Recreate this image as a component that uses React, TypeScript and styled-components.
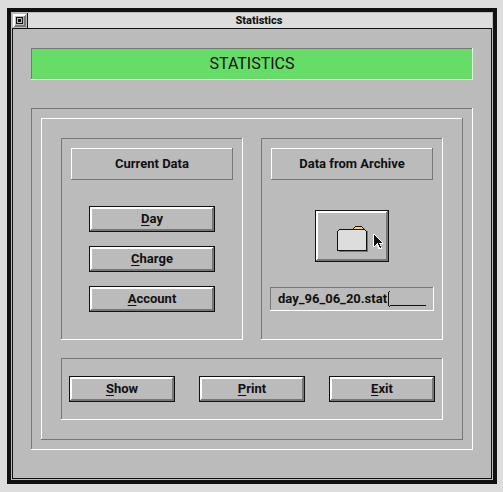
import React, { useState } from "react";
import styled, { createGlobalStyle, css } from "styled-components";

const ink = "#111";
const face = "#bbb";
const shade = "#777";
const pale = "#ddd";

const Global = createGlobalStyle`
  * { box-sizing: border-box; }
  body {
    margin: 0;
    background: ${pale};
    color: ${ink};
    font: bold 12px/16px Roboto, "Liberation Sans", sans-serif;
  }
  button, input { font: inherit; color: inherit; }
`;

const sunken = css`
  box-shadow: inset -1px -1px #fff, inset 1px 1px ${shade};
`;

const raised = css`
  box-shadow: inset -1px -1px ${shade}, inset 1px 1px #fff;
`;

const Desktop = styled.div`
  padding: 8px 6px 8px 7px;
`;

const Window = styled.section`
  border: 4px solid ${ink};
  padding: 1px;
  background: ${face};
`;

const TitleBar = styled.header`
  display: flex;
  height: 15px;
  background: ${pale};
`;

const MenuButton = styled.button`
  display: block;
  width: 16px;
  height: 15px;
  padding: 0;
  border: 0;
  border-right: 1px solid ${ink};
  background: ${face};

  svg { display: block; }
`;

const Title = styled.h1`
  flex: 1;
  margin: 0;
  padding-right: 2px;
  font-size: 11px;
  font-weight: 800;
  line-height: 15px;
  text-align: center;
`;

const Body = styled.main`
  display: flex;
  flex-direction: column;
  gap: 28px;
  border: 1px solid ${ink};
  padding: 19px 18px 28px;
`;

const Banner = styled.h2`
  margin: 0;
  background: #6d6;
  font-size: 16px;
  font-weight: 400;
  line-height: 32px;
  text-align: center;
  box-shadow: inset -1px -1px #dfd, inset 1px 1px ${shade};
`;

const Frame = styled.div`
  padding: 10px;
  ${sunken}
`;

const Plate = styled.div`
  display: grid;
  grid-template-columns: 1fr 1fr;
  gap: 18px;
  padding: 20px;
  ${raised}
`;

const Panel = styled.section`
  display: flex;
  flex-direction: column;
  min-width: 0;
  padding: 10px 9px 28px;
  ${sunken}
`;

const PanelTitle = styled.h3`
  margin: 0 1px;
  font-size: 13px;
  line-height: 32px;
  text-align: center;
  ${raised}
`;

const ButtonColumn = styled.div`
  display: flex;
  flex-direction: column;
  gap: 14px;
  padding: 26px 19px 0;
`;

const Actions = styled.section`
  grid-column: 1 / -1;
  display: grid;
  grid-template-columns: repeat(3, 1fr);
  gap: 24px;
  padding: 18px 8px;
  ${sunken}
`;

const bevel = css`
  border: 1px solid ${ink};
  border-radius: 0;
  padding: 0;
  background: ${face};
  box-shadow: inset -1px -1px ${shade}, inset 1px 1px #fff,
    inset -2px -2px ${shade}, inset 2px 2px #fff;
`;

const PushButton = styled.button`
  ${bevel}
  height: 26px;
  font-size: 13px;
  line-height: 24px;
`;

const Mnemonic = styled.span`
  text-decoration: underline 1px;
  text-underline-offset: 2px;
  text-decoration-skip-ink: none;
`;

const FolderButton = styled.button`
  ${bevel}
  position: relative;
  align-self: center;
  display: flex;
  align-items: center;
  justify-content: center;
  width: 74px;
  height: 52px;
  margin-top: 30px;
  padding: 6px 0 0 2px;
`;

const Pointer = styled.svg`
  position: absolute;
  left: 57px;
  top: 23px;
`;

const Field = styled.label`
  display: flex;
  align-items: center;
  height: 24px;
  margin-top: 25px;
  padding: 0 8px;
  font-size: 13px;
  ${sunken}
`;

const FileInput = styled.input`
  field-sizing: content;
  min-width: 0;
  padding: 0;
  border: 0;
  outline: 0;
  background: transparent;
`;

const Caret = styled.svg`
  flex: none;
  margin-left: 1px;
`;

const Blank = styled.span`
  flex: 1;
  height: 1px;
  margin-top: 12px;
  background: ${ink};
`;

function Push({ label }: { label: string }) {
  return (
    <PushButton type="button" accessKey={label[0].toLowerCase()}>
      <Mnemonic>{label[0]}</Mnemonic>
      {label.slice(1)}
    </PushButton>
  );
}

function FolderIcon() {
  return (
    <svg width="32" height="26" viewBox="0 0 32 26" shapeRendering="crispEdges" aria-hidden="true">
      <path d="M2 25h28V5h1v21H2z" fill={shade} />
      <path d="M16 3V2h1V1h1V0h7v1h1v1h1v1z" fill={ink} />
      <path d="M17 3V2h1V1h7v1h1v1z" fill="#fc7" />
      <path d="M2 3h26v1h1v1h1v20H0V5h1V4h1z" fill={ink} />
      <path d="M2 4h26v1h1v19H1V5h1z" fill={pale} />
    </svg>
  );
}

function PointerIcon() {
  return (
    <Pointer width="10" height="16" viewBox="0 0 10 16" shapeRendering="crispEdges" aria-hidden="true">
      <path d="M0 0h2v1h1v1h1v1h1v1h1v1h1v1h1v1h1v1h1v2H7v1h1v2h1v2H5v-2H4v-2H3v1H2v1H0z" fill="#fff" />
      <path d="M1 1v11h1v-1h1v-1h1v-1h1v2h1v2h1v1h1v-2H7v-2H6V9h3V8H8V7H7V6H6V5H5V4H4V3H3V2H2V1z" fill={ink} />
    </Pointer>
  );
}

export default function App() {
  const [file, setFile] = useState("day_96_06_20.stat");

  return (
    <Desktop>
      <Global />
      <Window>
        <TitleBar>
          <MenuButton type="button" aria-label="Window menu">
            <svg width="15" height="15" viewBox="0 0 15 15" shapeRendering="crispEdges" aria-hidden="true">
              <path d="M1 1h13v1h-1v1H3v10H2v1H1z" fill="#fff" />
              <path d="M14 2v12H2v-1h1v-1h9V3h1V2z" fill={shade} />
              <path d="M4 4h7v7H4z" fill={ink} />
              <path d="M5 5h5v5H5z" fill={face} />
              <path d="M6 6h3v3H6z" fill={ink} />
            </svg>
          </MenuButton>
          <Title>Statistics</Title>
        </TitleBar>
        <Body>
          <Banner>STATISTICS</Banner>
          <Frame>
            <Plate>
              <Panel>
                <PanelTitle>Current Data</PanelTitle>
                <ButtonColumn>
                  <Push label="Day" />
                  <Push label="Charge" />
                  <Push label="Account" />
                </ButtonColumn>
              </Panel>
              <Panel>
                <PanelTitle>Data from Archive</PanelTitle>
                <FolderButton type="button" aria-label="Open archive">
                  <FolderIcon />
                  <PointerIcon />
                </FolderButton>
                <Field>
                  <FileInput
                    aria-label="Archive file"
                    value={file}
                    onChange={(e) => setFile(e.target.value)}
                  />
                  <Caret width="2" height="16" viewBox="0 0 2 16" shapeRendering="crispEdges" aria-hidden="true">
                    <path d="M0 1h1V0h1v1h-1v14h1v1h-1v-1H0z" fill={ink} />
                  </Caret>
                  <Blank />
                </Field>
              </Panel>
              <Actions>
                <Push label="Show" />
                <Push label="Print" />
                <Push label="Exit" />
              </Actions>
            </Plate>
          </Frame>
        </Body>
      </Window>
    </Desktop>
  );
}
